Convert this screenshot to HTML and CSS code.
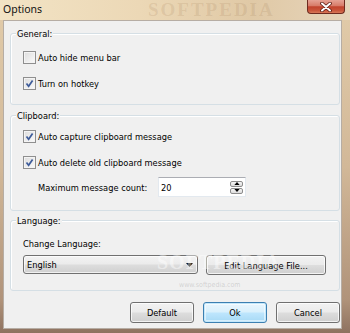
FILE: index.html
```html
<!DOCTYPE html>
<html>
<head>
<meta charset="utf-8">
<title>Options</title>
<link rel="stylesheet" href="styles.css">
</head>
<body>
<div class="window">
  <div class="titlebar">
    <span class="title">Options</span>
    <span class="wm-title">SOFTPEDIA</span>
    <div class="close">
      <svg width="14" height="10" viewBox="0 0 14 10"><path d="M3 1.5 L11 8.5 M11 1.5 L3 8.5" stroke="#5a1c12" stroke-width="3.6" stroke-linecap="round"/><path d="M3 1.5 L11 8.5 M11 1.5 L3 8.5" stroke="#ffffff" stroke-width="2" stroke-linecap="round"/></svg>
    </div>
  </div>
  <div class="mid">
    <div class="client">
      <div class="group g1">
        <span class="legend">General:</span>
        <label class="row check"><span class="box"></span>Auto hide menu bar</label>
        <label class="row check"><span class="box checked"><svg width="13" height="13" viewBox="0 0 13 13"><path d="M3.5 6.5 L5.6 9.2 L9.6 3.4" fill="none" stroke="#3e5c9a" stroke-width="1.7"/></svg></span>Turn on hotkey</label>
      </div>
      <div class="group g2">
        <span class="legend">Clipboard:</span>
        <label class="row check"><span class="box checked"><svg width="13" height="13" viewBox="0 0 13 13"><path d="M3.5 6.5 L5.6 9.2 L9.6 3.4" fill="none" stroke="#3e5c9a" stroke-width="1.7"/></svg></span>Auto capture clipboard message</label>
        <label class="row check"><span class="box checked"><svg width="13" height="13" viewBox="0 0 13 13"><path d="M3.5 6.5 L5.6 9.2 L9.6 3.4" fill="none" stroke="#3e5c9a" stroke-width="1.7"/></svg></span>Auto delete old clipboard message</label>
        <div class="row spinrow">
          <span class="spinlabel">Maximum message count:</span>
          <div class="spin">
            <span class="spinval">20</span>
            <div class="spinbtns">
              <span class="sb"><svg width="7" height="4" viewBox="0 0 7 4"><path d="M0 4 L3.5 0 L7 4 Z" fill="#000"/></svg></span>
              <span class="sb"><svg width="7" height="4" viewBox="0 0 7 4"><path d="M0 0 L7 0 L3.5 4 Z" fill="#000"/></svg></span>
            </div>
          </div>
        </div>
      </div>
      <div class="group g3">
        <span class="legend">Language:</span>
        <div class="row langlabel">Change Language:</div>
        <div class="ctrlrow">
          <div class="combo"><span class="combotext">English</span><span class="arrow"><svg width="7" height="4" viewBox="0 0 7 4"><path d="M0 0 L7 0 L3.5 4 Z" fill="#000"/></svg></span></div>
          <div class="btn editbtn">Edit Language File...</div>
        </div>
      </div>
      <div class="buttons">
        <div class="btn">Default</div>
        <div class="btn ok">Ok</div>
        <div class="btn">Cancel</div>
      </div>
      <span class="wm-mid">SOFTPEDIA</span>
      <span class="wm-url">www.softpedia.com</span>
    </div>
  </div>
</div>
</body>
</html>
```
FILE: styles.css
```css
html, body {
  margin: 0;
  padding: 0;
  background: #b89c80;
}
body {
  font-family: "DejaVu Sans Condensed", "Liberation Sans", sans-serif;
  font-size: 9.2px;
  color: #000;
}
.window {
  width: 350px;
  height: 333px;
  display: flex;
  flex-direction: column;
  position: relative;
  overflow: hidden;
  background: linear-gradient(to bottom, #e2ccaa 0%, #d2b898 50%, #b0937a 90%, #8e7260 100%);
}
.titlebar {
  height: 20px;
  display: flex;
  align-items: flex-start;
  position: relative;
  background: linear-gradient(to right, #f2e3c4 0%, #ecd8b6 40%, #e0c9a6 72%, #e6d4ba 100%);
}
.title {
  font-family: "Noto Sans", "Open Sans", sans-serif;
  font-size: 10.5px;
  line-height: 19px;
  padding-left: 3px;
  color: #111;
}
.wm-title {
  position: absolute;
  left: 148px;
  top: 0;
  font-family: "Liberation Serif", serif;
  font-weight: bold;
  font-size: 19px;
  line-height: 19px;
  letter-spacing: 2px;
  color: rgba(140, 100, 60, 0.15);
}
.close {
  margin-left: auto;
  margin-right: 5px;
  width: 38px;
  height: 14px;
  box-sizing: border-box;
  border: 1px solid #6e2b1f;
  border-top: 0;
  border-radius: 0 0 4px 4px;
  background: linear-gradient(to bottom, #e6a294 0%, #d77b68 45%, #c1432d 52%, #c9553b 80%, #d87858 100%);
  display: flex;
  align-items: center;
  justify-content: center;
  position: relative;
  z-index: 1;
}
.mid {
  display: flex;
  padding: 0 8px 0 3px;
}
.client {
  width: 339px;
  height: 309px;
  box-sizing: border-box;
  border: 1px solid rgba(110, 90, 70, 0.45);
  background: #f0f0f0;
  padding: 12px 1px 0 6px;
  display: flex;
  flex-direction: column;
  position: relative;
}
.group {
  position: relative;
  border: 1px solid #d5dfe5;
  border-radius: 3px;
  box-shadow: inset 1px 1px 0 #fff;
  display: flex;
  flex-direction: column;
  padding-left: 12px;
}
.legend {
  position: absolute;
  top: -7px;
  left: 5px;
  padding: 0 1px;
  line-height: 13px;
  background: #f0f0f0;
}
.g1 {
  height: 72px;
  box-sizing: border-box;
  padding-top: 17px;
  gap: 13px;
}
.g2 {
  margin-top: 10px;
  height: 96px;
  box-sizing: border-box;
  padding-top: 14px;
}
.g3 {
  margin-top: 9px;
  height: 71px;
  box-sizing: border-box;
  padding-top: 16px;
}
.row {
  height: 13px;
  display: flex;
  align-items: center;
  line-height: 13px;
  white-space: nowrap;
}
.g2 .check + .check {
  margin-top: 13px;
}
.check {
  gap: 2px;
}
.box {
  width: 13px;
  height: 13px;
  box-sizing: border-box;
  border: 1px solid #8f8f8f;
  background: linear-gradient(to bottom right, #dcdcdc, #fbfbfb);
  box-shadow: inset 0 0 0 1px #f4f4f4;
  position: relative;
  flex: none;
}
.box svg {
  position: absolute;
  left: -1px;
  top: -1px;
}
.spinrow {
  height: 20px;
  margin-top: 8px;
  padding-left: 15px;
}
.spinlabel {
  width: 120px;
}
.spin {
  width: 88px;
  height: 20px;
  box-sizing: border-box;
  border: 1px solid #e3e9ef;
  border-top-color: #abadb3;
  background: #fff;
  display: flex;
  align-items: center;
  padding-left: 2px;
  padding-right: 2px;
}
.spinval {
  flex: 1;
  color: #000;
}
.spinbtns {
  display: flex;
  flex-direction: column;
  gap: 1px;
}
.sb {
  width: 13px;
  height: 6px;
  box-sizing: border-box;
  border: 1px solid #8d8d8d;
  border-radius: 2px;
  background: linear-gradient(#f6f6f6, #dcdcdc);
  display: flex;
  align-items: center;
  justify-content: center;
}
.sb svg {
  width: 6px;
  height: 3px;
}
.langlabel {
  height: 13px;
}
.ctrlrow {
  display: flex;
  margin-top: 5px;
  gap: 8px;
  align-items: flex-start;
}
.combo {
  width: 175px;
  height: 19px;
  box-sizing: border-box;
  border: 1px solid #707070;
  border-radius: 3px;
  background: linear-gradient(to bottom, #f3f3f3 0%, #ebebeb 48%, #dddddd 52%, #d0d0d0 100%);
  box-shadow: inset 0 0 0 1px rgba(255,255,255,0.7);
  display: flex;
  align-items: center;
}
.combotext {
  flex: 1;
  padding-left: 3px;
}
.arrow {
  width: 12px;
  height: 17px;
  display: flex;
  align-items: center;
  justify-content: center;
  margin-right: 2px;
}
.btn {
  height: 21px;
  box-sizing: border-box;
  border: 1px solid #707070;
  border-radius: 3px;
  background: linear-gradient(to bottom, #f2f2f2 0%, #ebebeb 48%, #dddddd 52%, #cfcfcf 100%);
  box-shadow: inset 0 0 0 1px rgba(255,255,255,0.75);
  display: flex;
  align-items: center;
  justify-content: center;
  white-space: nowrap;
}
.editbtn {
  width: 120px;
  height: 20px;
}
.buttons {
  margin-top: 11px;
  display: flex;
  justify-content: flex-end;
  gap: 9px;
}
.buttons .btn {
  width: 64px;
}
.btn.ok {
  border-color: #3c7fb1;
  background: linear-gradient(to bottom, #eaf6fd 0%, #d9f0fc 48%, #bee6fd 52%, #a7d9f5 100%);
  box-shadow: inset 0 0 0 1px #c4e8fb, inset 0 0 0 2px rgba(255,255,255,0.5);
}
.wm-mid {
  position: absolute;
  left: 153px;
  top: 230px;
  font-family: "Liberation Serif", serif;
  font-weight: bold;
  font-size: 20px;
  letter-spacing: 1px;
  color: rgba(255, 255, 255, 0.45);
  pointer-events: none;
}
.wm-url {
  position: absolute;
  left: 175px;
  top: 260px;
  font-size: 7px;
  color: rgba(150, 150, 150, 0.35);
  pointer-events: none;
}
```
